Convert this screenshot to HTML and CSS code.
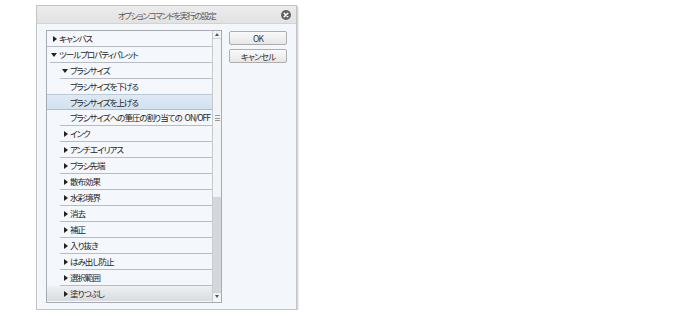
FILE: index.html
```html
<!DOCTYPE html>
<html lang="ja">
<head>
  <meta charset="UTF-8" />
  <title>オプションコマンドを実行の設定</title>
  <link rel="stylesheet" href="styles.css">
</head>
<body>

  <!-- Dialog -->
  <div class="dialog">
    <div class="titlebar">
      <span class="title">オプションコマンドを実行の設定</span>
      <span class="close">
        <svg width="10" height="10" viewBox="0 0 10 10">
          <circle cx="5" cy="5" r="5" fill="#5f6163"/>
          <path d="M3.2 3.2 L6.8 6.8 M6.8 3.2 L3.2 6.8" stroke="#fff" stroke-width="1.5" stroke-linecap="round"/>
        </svg>
      </span>
    </div>

    <div class="content">
      <!-- Command tree -->
      <div class="list">
        <div class="rows">
          <div class="row lv0"><span class="tri right"></span>キャンバス</div>
          <div class="row lv0 open"><span class="tri down"></span>ツールプロパティパレット</div>
          <div class="row lv1"><span class="tri down"></span>ブラシサイズ</div>
          <div class="row lv2">ブラシサイズを下げる</div>
          <div class="row lv2 selected">ブラシサイズを上げる</div>
          <div class="row lv2">ブラシサイズへの筆圧の割り当ての ON/OFF</div>
          <div class="row lv1"><span class="tri right"></span>インク</div>
          <div class="row lv1"><span class="tri right"></span>アンチエイリアス</div>
          <div class="row lv1"><span class="tri right"></span>ブラシ先端</div>
          <div class="row lv1"><span class="tri right"></span>散布効果</div>
          <div class="row lv1"><span class="tri right"></span>水彩境界</div>
          <div class="row lv1"><span class="tri right"></span>消去</div>
          <div class="row lv1"><span class="tri right"></span>補正</div>
          <div class="row lv1"><span class="tri right"></span>入り抜き</div>
          <div class="row lv1"><span class="tri right"></span>はみ出し防止</div>
          <div class="row lv1"><span class="tri right"></span>選択範囲</div>
          <div class="row lv1 last"><span class="tri right"></span>塗りつぶし</div>
        </div>
        <div class="scrollbar">
          <div class="arrow up"></div>
          <div class="thumb"><span class="grip"></span></div>
          <div class="track"></div>
          <div class="arrow down"></div>
        </div>
      </div>

      <!-- Buttons -->
      <div class="buttons">
        <button class="btn">OK</button>
        <button class="btn">キャンセル</button>
      </div>
    </div>
  </div>

</body>
</html>
```

FILE: styles.css
```css
/* Global */
body {
  margin: 0;
  background: #fff;
  font-family: "Noto Sans CJK JP", "Noto Sans", sans-serif;
  font-feature-settings: "palt";
  color: #333;
}
/* Dialog frame */
.dialog {
  width: 259px;
  height: 303px;
  margin: 5px 0 0 36px;
  border: 1px solid #c4c4c4;
  box-shadow: 1px 1px 0 #d8d8d8, 2px 2px 0 #ececec;
  background: #f3f6fa;
  display: flex;
  flex-direction: column;
}
.titlebar {
  height: 17px;
  background: linear-gradient(#ececec, #e2e2e2);
  border-bottom: 1px solid #d3d3d3;
  display: flex;
  align-items: center;
  justify-content: center;
  position: relative;
}
.title {
  font-size: 8.5px;
  color: #5a5a5a;
  letter-spacing: -1.3px;
}
.close {
  position: absolute;
  right: 5px;
  top: 4px;
  display: flex;
}
/* Body */
.content {
  display: flex;
  padding: 6px 8px 0 9px;
}
/* List box */
.list {
  width: 174px;
  height: 271px;
  border: 1px solid #a7abb0;
  background: #f4f7fb;
  display: flex;
  overflow: hidden;
}
.rows {
  flex: 1;
  min-width: 0;
  overflow: hidden;
}
.row {
  height: 15px;
  border-bottom: 1px solid #b7bcc2;
  font-size: 8.5px;
  letter-spacing: -1px;
  word-spacing: 2px;
  line-height: 15px;
  white-space: nowrap;
  color: #262626;
  display: flex;
  align-items: center;
}
.row.lv0 { padding-left: 4px; }
.row.lv0.open { margin-left: 3px; padding-left: 1px; }
.row.lv1 { margin-left: 13px; padding-left: 2px; }
.row.lv2 { margin-left: 13px; padding-left: 10px; }
.row.selected {
  margin-left: 0;
  padding-left: 23px;
  background: linear-gradient(#dde9f4, #d3e2ef);
  border-top: 1px solid #b7c9da;
  border-bottom-color: #a9bfd3;
  height: 14px;
  margin-top: -1px;
}
.row.last {
  margin-left: 0;
  padding-left: 15px;
  border-bottom: none;
  background: linear-gradient(#eef0f3, #d9dce0);
}
/* Tree triangles */
.tri {
  display: inline-block;
  width: 0;
  height: 0;
  margin-right: 2px;
}
.tri.right {
  border-top: 3px solid transparent;
  border-bottom: 3px solid transparent;
  border-left: 4px solid #222;
  margin-left: 2px;
}
.tri.down {
  border-left: 3.5px solid transparent;
  border-right: 3.5px solid transparent;
  border-top: 4px solid #222;
}
/* Scrollbar */
.scrollbar {
  width: 8px;
  flex-shrink: 0;
  border-left: 1px solid #c6cbd0;
  display: flex;
  flex-direction: column;
  background: #f4f6f8;
}
.arrow {
  height: 7px;
  display: flex;
  align-items: center;
  justify-content: center;
  background: #f1f3f5;
  border-bottom: 1px solid #cdd1d5;
}
.arrow.up::after {
  content: "";
  border-left: 2.5px solid transparent;
  border-right: 2.5px solid transparent;
  border-bottom: 3px solid #555;
}
.arrow.down {
  border-bottom: none;
  border-top: 1px solid #cdd1d5;
  margin-bottom: 2px;
}
.arrow.down::after {
  content: "";
  border-left: 2.5px solid transparent;
  border-right: 2.5px solid transparent;
  border-top: 3px solid #555;
}
.thumb {
  height: 158px;
  background: #f2f4f6;
  display: flex;
  align-items: center;
  justify-content: center;
}
.grip {
  width: 5px;
  height: 4px;
  border-top: 1px solid #999;
  border-bottom: 1px solid #999;
  position: relative;
}
.grip::after {
  content: "";
  position: absolute;
  left: 0;
  right: 0;
  top: 1.5px;
  border-top: 1px solid #999;
}
.track {
  flex: 1;
  background: #d4d7db;
}
/* Buttons */
.buttons {
  margin-left: 7px;
  display: flex;
  flex-direction: column;
  gap: 4px;
  padding-top: 1px;
}
.btn {
  width: 58px;
  height: 14px;
  padding: 0;
  border: 1px solid #adadad;
  border-radius: 2px;
  background: linear-gradient(#fafafa, #e6e6e6);
  font-family: inherit;
  font-feature-settings: "palt";
  font-size: 8.5px;
  letter-spacing: -0.8px;
  line-height: 12px;
  color: #333;
}
```
